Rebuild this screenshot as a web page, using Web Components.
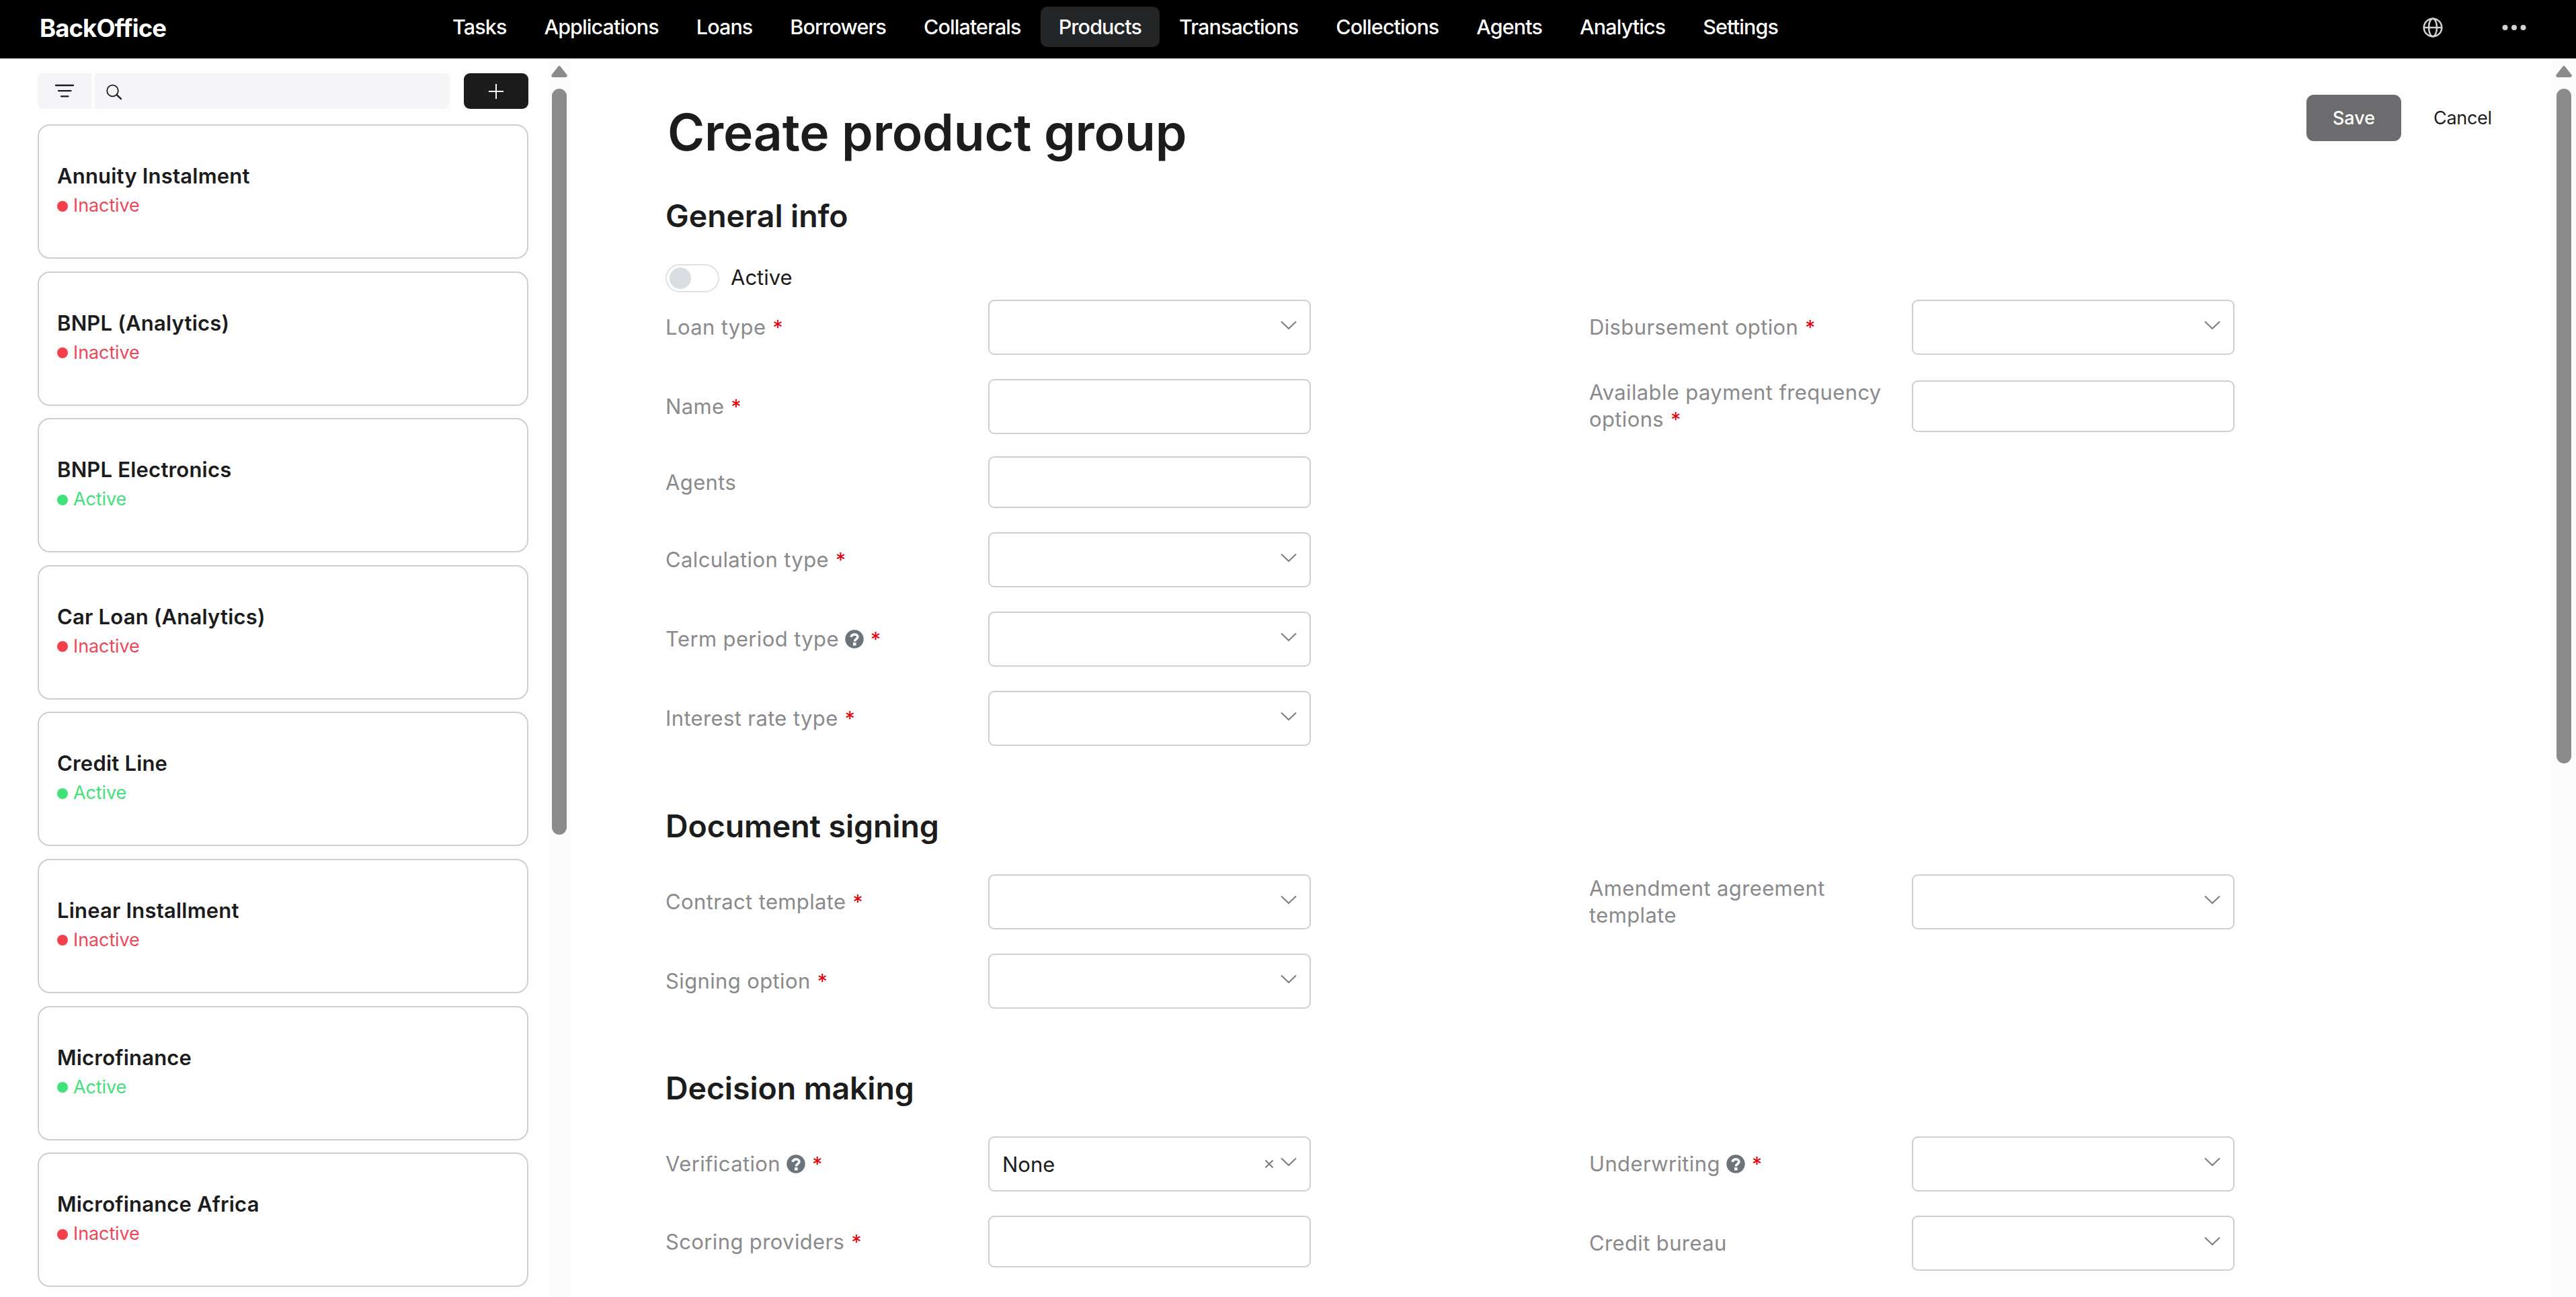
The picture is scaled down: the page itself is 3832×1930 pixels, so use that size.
<!DOCTYPE html>
<html lang="en">
<head>
<meta charset="utf-8">
<title>BackOffice - Create product group</title>
<style>
  html, body {
    margin: 0;
    height: 1930px;
    overflow: hidden;
    background: #fefefe;
    font-family: Inter, "Liberation Sans", sans-serif;
    font-size: 31px;
    color: #1c1c1d;
  }

  body {
    display: flex;
    flex-direction: column;
  }
</style>
</head>
<body>
  <app-header>
    <nav-item>Tasks</nav-item>
    <nav-item>Applications</nav-item>
    <nav-item>Loans</nav-item>
    <nav-item>Borrowers</nav-item>
    <nav-item>Collaterals</nav-item>
    <nav-item active>Products</nav-item>
    <nav-item>Transactions</nav-item>
    <nav-item>Collections</nav-item>
    <nav-item>Agents</nav-item>
    <nav-item>Analytics</nav-item>
    <nav-item>Settings</nav-item>
  </app-header>

  <app-layout>
    <product-list slot="side">
      <product-card status="Inactive">Annuity Instalment</product-card>
      <product-card status="Inactive">BNPL (Analytics)</product-card>
      <product-card status="Active">BNPL Electronics</product-card>
      <product-card status="Inactive">Car Loan (Analytics)</product-card>
      <product-card status="Active">Credit Line</product-card>
      <product-card status="Inactive">Linear Installment</product-card>
      <product-card status="Active">Microfinance</product-card>
      <product-card status="Inactive">Microfinance Africa</product-card>
    </product-list>

    <form-page heading="Create product group">
      <form-section heading="General info">
        <toggle-switch slot="top">Active</toggle-switch>
        <form-field slot="left" type="select" required>Loan type</form-field>
        <form-field slot="left" type="text" required>Name</form-field>
        <form-field slot="left" type="tags" style="margin-top: -3px">Agents</form-field>
        <form-field slot="left" type="select" required>Calculation type</form-field>
        <form-field slot="left" type="select" required help>Term period type</form-field>
        <form-field slot="left" type="select" required>Interest rate type</form-field>
        <form-field slot="right" type="select" required>Disbursement option</form-field>
        <form-field slot="right" type="tags" required>Available payment frequency options</form-field>
      </form-section>

      <form-section heading="Document signing">
        <form-field slot="left" type="select" required>Contract template</form-field>
        <form-field slot="left" type="select" required>Signing option</form-field>
        <form-field slot="right" type="select">Amendment agreement template</form-field>
      </form-section>

      <form-section heading="Decision making">
        <form-field slot="left" type="select" value="None" required help>Verification</form-field>
        <form-field slot="left" type="tags" required>Scoring providers</form-field>
        <form-field slot="right" type="select" required help>Underwriting</form-field>
        <form-field slot="right" type="select">Credit bureau</form-field>
      </form-section>
    </form-page>
  </app-layout>

<script>
  class AppHeader extends HTMLElement {
    constructor() {
      super();
      this.attachShadow({ mode: 'open' });
    }

    connectedCallback() {
      this.shadowRoot.innerHTML = `
        <style>
          :host {
            display: flex;
            flex: none;
            box-sizing: border-box;
            height: 87px;
            padding: 10px 74px 0 59px;
            background: #000;
            color: #fff;
          }

          .logo {
            width: 587px;
            font-size: 36.5px;
            font-weight: 700;
            line-height: 64px;
            letter-spacing: -0.9px;
          }

          nav {
            display: flex;
            gap: 2px;
            height: 60px;
          }

          .actions {
            display: flex;
            align-items: center;
            gap: 88px;
            height: 61px;
            margin-left: auto;
          }

          svg {
            display: block;
          }
        </style>

        <div class="logo">BackOffice</div>
        <nav><slot></slot></nav>
        <div class="actions">
          <svg width="30" height="30" viewBox="0 0 30 30" fill="none" stroke="#d2d2d2" stroke-width="2.5">
            <circle cx="15" cy="15" r="13.3"/>
            <ellipse cx="15" cy="15" rx="6" ry="13.3"/>
            <path d="M2 15h26"/>
          </svg>
          <svg width="36" height="8" viewBox="0 0 36 8" fill="#d2d2d2">
            <circle cx="4.5" cy="4" r="4"/>
            <circle cx="18" cy="4" r="4"/>
            <circle cx="31.5" cy="4" r="4"/>
          </svg>
        </div>
      `;
    }
  }

  class NavItem extends HTMLElement {
    constructor() {
      super();
      this.attachShadow({ mode: 'open' });
    }

    connectedCallback() {
      this.shadowRoot.innerHTML = `
        <style>
          :host {
            display: block;
            padding: 0 27px;
            border-radius: 10px;
            font-size: 30.5px;
            font-weight: 450;
            line-height: 60px;
            letter-spacing: -0.9px;
            white-space: nowrap;
          }

          :host([active]) {
            background: #242526;
          }
        </style>
        <slot></slot>
      `;
    }
  }

  class AppLayout extends HTMLElement {
    constructor() {
      super();
      this.attachShadow({ mode: 'open' });
    }

    connectedCallback() {
      this.shadowRoot.innerHTML = `
        <style>
          :host {
            display: flex;
            flex: 1;
            min-height: 0;
          }

          .side {
            display: flex;
            width: 848px;
          }

          .content {
            display: flex;
            flex: 1;
          }

          ::slotted(*) {
            flex: 1;
          }
        </style>

        <div class="side">
          <slot name="side"></slot>
          <scroll-bar style="--thumb: 1110px; width: 32px"></scroll-bar>
        </div>
        <div class="content">
          <slot></slot>
          <scroll-bar style="--thumb: 1004px; width: 36px"></scroll-bar>
        </div>
      `;
    }
  }

  class ScrollBar extends HTMLElement {
    constructor() {
      super();
      this.attachShadow({ mode: 'open' });
    }

    connectedCallback() {
      this.shadowRoot.innerHTML = `
        <style>
          :host {
            display: flex;
            flex-direction: column;
            align-items: center;
            flex: none;
            box-sizing: border-box;
            padding-top: 11px;
            background: #fcfcfc;
          }

          .thumb {
            width: 22px;
            height: var(--thumb);
            margin-top: 17px;
            border-radius: 11px;
            background: #8b8b8b;
          }
        </style>

        <svg width="24" height="17" viewBox="0 0 24 17" fill="#8b8b8b" stroke="#8b8b8b" stroke-width="5" stroke-linejoin="round">
          <path d="M12 2.7 21.2 14.5H2.8z"/>
        </svg>
        <div class="thumb"></div>
      `;
    }
  }

  class ProductList extends HTMLElement {
    constructor() {
      super();
      this.attachShadow({ mode: 'open' });
    }

    connectedCallback() {
      this.shadowRoot.innerHTML = `
        <style>
          :host {
            display: block;
            padding: 22px 30px 0 56px;
          }

          .toolbar {
            display: flex;
            height: 53px;
            margin-bottom: 23px;
          }

          .filter,
          .search,
          .add {
            display: flex;
            align-items: center;
            box-sizing: border-box;
            background: #f5f5f7;
          }

          .filter {
            justify-content: center;
            width: 80px;
            padding-bottom: 2px;
            border-radius: 8px 0 0 8px;
          }

          .search {
            width: 528px;
            margin: 0 21px 0 5px;
            padding: 2px 0 0 17px;
            border-radius: 0 8px 8px 0;
          }

          .add {
            justify-content: center;
            width: 96px;
            border-radius: 9px;
            background: #1c1c1d;
          }

          .cards {
            display: flex;
            flex-direction: column;
            gap: 18.6px;
          }
        </style>

        <div class="toolbar">
          <div class="filter">
            <svg width="30" height="20" viewBox="0 0 30 20" stroke="#1c1c1d" stroke-width="2.3" stroke-linecap="round">
              <path d="M2 2h26M6 10.200h18.500M10 18.300h10.500"/>
            </svg>
          </div>
          <div class="search">
            <svg width="24" height="24" viewBox="0 0 24 24" fill="none" stroke="#1c1c1d" stroke-linecap="round">
              <circle cx="9.500" cy="10" r="8.300" stroke-width="1.800"/>
              <path d="M15.700 16.200 22 22.200" stroke-width="2.400"/>
            </svg>
          </div>
          <div class="add">
            <svg width="22" height="22" viewBox="0 0 22 22" stroke="#fff" stroke-width="2">
              <path d="M11 0v22M0 11h22"/>
            </svg>
          </div>
        </div>
        <div class="cards"><slot></slot></div>
      `;
    }
  }

  class ProductCard extends HTMLElement {
    constructor() {
      super();
      this.attachShadow({ mode: 'open' });
    }

    connectedCallback() {
      this.shadowRoot.innerHTML = `
        <style>
          :host {
            display: block;
            box-sizing: border-box;
            height: 200px;
            padding: 55px 27px 0;
            border: 2px solid #cecfd0;
            border-radius: 18px;
            --dot: #f43f4c;
            --status: #ec4857;
          }

          :host([status="Active"]) {
            --dot: #42e27b;
            --status: #42e07a;
          }

          .name {
            font-size: 31px;
            font-weight: 590;
            line-height: 40px;
            letter-spacing: 0.2px;
          }

          .status {
            display: flex;
            align-items: center;
            gap: 8px;
            margin-top: 6px;
            font-size: 27px;
            line-height: 36px;
            letter-spacing: -0.1px;
            color: var(--status);
          }

          .dot {
            width: 16px;
            height: 16px;
            margin-top: 1px;
            border-radius: 50%;
            background: var(--dot);
          }
        </style>

        <div class="name"><slot></slot></div>
        <div class="status"><span class="dot"></span><span>${this.getAttribute('status')}</span></div>
      `;
    }
  }

  class FormPage extends HTMLElement {
    constructor() {
      super();
      this.attachShadow({ mode: 'open' });
    }

    connectedCallback() {
      this.shadowRoot.innerHTML = `
        <style>
          :host {
            display: block;
            padding: 54px 42px 0 142px;
          }

          header {
            display: flex;
            justify-content: space-between;
            align-items: flex-start;
            height: 107px;
            margin-bottom: 43px;
          }

          h1 {
            margin: 6px 0 0 3px;
            font-size: 75px;
            font-weight: 600;
            line-height: 100px;
            letter-spacing: -0.2px;
          }

          .buttons {
            display: flex;
            font-size: 27px;
            line-height: 69px;
          }

          .save {
            width: 141px;
            border-radius: 11px;
            background: #6c6c6e;
            color: #fff;
            font-weight: 500;
            text-align: center;
          }

          .cancel {
            width: 134px;
            padding-left: 48px;
            letter-spacing: -0.3px;
          }

          .sections {
            display: flex;
            flex-direction: column;
            gap: 88.5px;
          }
        </style>

        <header>
          <h1>${this.getAttribute('heading')}</h1>
          <div class="buttons">
            <div class="save">Save</div>
            <div class="cancel">Cancel</div>
          </div>
        </header>
        <div class="sections"><slot></slot></div>
      `;
    }
  }

  class FormSection extends HTMLElement {
    constructor() {
      super();
      this.attachShadow({ mode: 'open' });
    }

    connectedCallback() {
      this.shadowRoot.innerHTML = `
        <style>
          :host {
            display: block;
          }

          h2 {
            margin: 0 0 42px;
            font-size: 46.5px;
            font-weight: 580;
            line-height: 60px;
            letter-spacing: -0.1px;
          }

          .columns {
            display: grid;
            grid-template-columns: 960px 960px;
            column-gap: 414px;
          }

          .column {
            display: flex;
            flex-direction: column;
            gap: 36px;
          }
        </style>

        <h2>${this.getAttribute('heading')}</h2>
        <slot name="top"></slot>
        <div class="columns">
          <div class="column"><slot name="left"></slot></div>
          <div class="column"><slot name="right"></slot></div>
        </div>
      `;
    }
  }

  class ToggleSwitch extends HTMLElement {
    constructor() {
      super();
      this.attachShadow({ mode: 'open' });
    }

    connectedCallback() {
      this.shadowRoot.innerHTML = `
        <style>
          :host {
            display: flex;
            align-items: center;
            gap: 17px;
            height: 42px;
            margin-bottom: 11px;
          }

          .track {
            box-sizing: border-box;
            width: 80px;
            height: 42px;
            padding: 3px 4px;
            border: 2px solid #dfe2e5;
            border-radius: 21px;
          }

          .knob {
            width: 32px;
            height: 32px;
            border-radius: 50%;
            background: #dadde1;
          }

          .text {
            margin-top: -3px;
          }
        </style>

        <div class="track"><div class="knob"></div></div>
        <span class="text"><slot></slot></span>
      `;
    }
  }

  class FormField extends HTMLElement {
    constructor() {
      super();
      this.attachShadow({ mode: 'open' });
    }

    connectedCallback() {
      const type = this.getAttribute('type');
      const value = this.getAttribute('value') || '';

      const help = this.hasAttribute('help') ? `
        <svg class="help" width="28" height="28" viewBox="0 0 28 28">
          <circle cx="14" cy="14" r="13.700" fill="#6c747b"/>
          <path d="M8.800 10.900C9.800 8.500 11.500 7 14.200 7c2.800 0 4.700 1.500 4.700 3.800 0 3-4.500 3.200-4.500 6.600" fill="none" stroke="#fff" stroke-width="3.600"/>
          <path d="M12 19.200h4.600v4.400H12z" fill="#fff"/>
        </svg>` : '';

      const clear = value ? `
        <svg width="14" height="14" viewBox="0 0 14 14" fill="none" stroke="#808082" stroke-width="2.200">
          <path d="M1.500 1.500l11 11M12.500 1.500l-11 11"/>
        </svg>` : '';

      const chevron = type === 'select' ? `
        <svg class="chevron" width="24" height="14" viewBox="0 0 24 14" fill="none" stroke="#808082" stroke-width="2.200">
          <path d="M1 1.500 12 12 23 1.500"/>
        </svg>` : '';

      this.shadowRoot.innerHTML = `
        <style>
          :host {
            display: flex;
            align-items: center;
          }

          .label {
            box-sizing: border-box;
            width: 480px;
            padding-right: 30px;
            line-height: 40px;
            letter-spacing: 0.37px;
            color: #8a8a8c;
          }

          .required {
            margin-left: 1px;
            font-size: 30px;
            font-weight: 400;
            line-height: 1;
            color: #e3000b;
          }

          .help {
            vertical-align: -3px;
          }

          .control {
            display: flex;
            align-items: center;
            gap: 10px;
            box-sizing: border-box;
            width: 480px;
            height: 82px;
            padding: 0 19px;
            border: 2px solid #cecfd0;
            border-radius: 9px;
            background: #fff;
          }

          .control.tags {
            height: 77px;
          }

          .value {
            flex: 1;
          }

          .chevron {
            margin-top: -6px;
          }
        </style>

        <div class="label"><slot></slot>${help ? ' ' + help : ''}${this.hasAttribute('required') ? ' <span class="required">*</span>' : ''}</div>
        <div class="control ${type}"><span class="value">${value}</span>${clear}${chevron}</div>
      `;
    }
  }

  customElements.define('app-header', AppHeader);
  customElements.define('nav-item', NavItem);
  customElements.define('app-layout', AppLayout);
  customElements.define('scroll-bar', ScrollBar);
  customElements.define('product-list', ProductList);
  customElements.define('product-card', ProductCard);
  customElements.define('form-page', FormPage);
  customElements.define('form-section', FormSection);
  customElements.define('toggle-switch', ToggleSwitch);
  customElements.define('form-field', FormField);
</script>
</body>
</html>
